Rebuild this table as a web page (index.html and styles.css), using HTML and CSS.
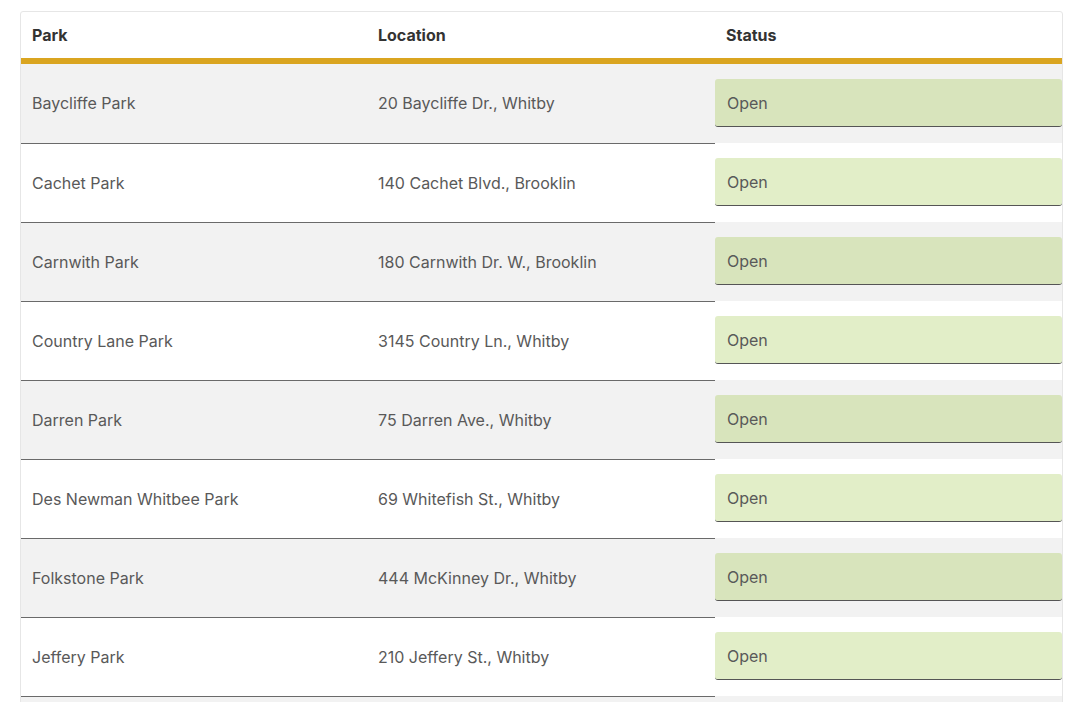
FILE: index.html
```html
<!DOCTYPE html>
<html lang="en">
<head>
<meta charset="utf-8">
<title>Parks</title>
<link rel="stylesheet" href="styles.css">
</head>
<body>
<div class="card">
  <table class="parks">
    <colgroup>
      <col class="c-park">
      <col class="c-loc">
      <col class="c-status">
    </colgroup>
    <thead>
      <tr><th>Park</th><th>Location</th><th>Status</th></tr>
    </thead>
    <tbody>
      <tr><td>Baycliffe Park</td><td>20 Baycliffe Dr., Whitby</td><td class="st"><div class="open">Open</div></td></tr>
      <tr><td>Cachet Park</td><td>140 Cachet Blvd., Brooklin</td><td class="st"><div class="open">Open</div></td></tr>
      <tr><td>Carnwith Park</td><td>180 Carnwith Dr. W., Brooklin</td><td class="st"><div class="open">Open</div></td></tr>
      <tr><td>Country Lane Park</td><td>3145 Country Ln., Whitby</td><td class="st"><div class="open">Open</div></td></tr>
      <tr><td>Darren Park</td><td>75 Darren Ave., Whitby</td><td class="st"><div class="open">Open</div></td></tr>
      <tr><td>Des Newman Whitbee Park</td><td>69 Whitefish St., Whitby</td><td class="st"><div class="open">Open</div></td></tr>
      <tr><td>Folkstone Park</td><td>444 McKinney Dr., Whitby</td><td class="st"><div class="open">Open</div></td></tr>
      <tr><td>Jeffery Park</td><td>210 Jeffery St., Whitby</td><td class="st"><div class="open">Open</div></td></tr>
      <tr class="more"><td></td><td></td><td class="st"></td></tr>
    </tbody>
  </table>
</div>
</body>
</html>
```

FILE: styles.css
```css
html {
  overflow: hidden;
}
body {
  margin: 0;
  padding: 11px 17px 0 20px;
  background: #ffffff;
  font-family: Inter, "Helvetica Neue", "Liberation Sans", Arial, sans-serif;
  font-size: 16px;
  color: #595959;
}
.card {
  border: 1px solid #e6e6e6;
  border-radius: 3px 3px 0 0;
  overflow: hidden;
}
.parks {
  width: 100%;
  border-collapse: collapse;
  table-layout: fixed;
}
.c-park { width: 346px; }
.c-loc { width: 348px; }
.parks th {
  text-align: left;
  font-weight: 700;
  color: #333333;
  height: 46px;
  padding: 0 0 0 11px;
  border-bottom: 6px solid #daa520;
  vertical-align: middle;
}
.parks td {
  height: 78px;
  padding: 0 0 0 11px;
  border-bottom: 1px solid #6a6a6a;
  vertical-align: middle;
}
.parks tbody tr:nth-child(odd) {
  background: #f2f2f2;
}
.parks td.st {
  border-bottom: none;
  padding: 15px 0 16px 0;
  height: 48px;
}
.open {
  height: 48px;
  box-sizing: border-box;
  display: flex;
  align-items: center;
  padding: 0 12px;
  background: #e2eec8;
  border-bottom: 1px solid #555555;
  border-radius: 3px;
}
.parks tbody tr:nth-child(odd) .open {
  background: #d8e4bc;
}
```
